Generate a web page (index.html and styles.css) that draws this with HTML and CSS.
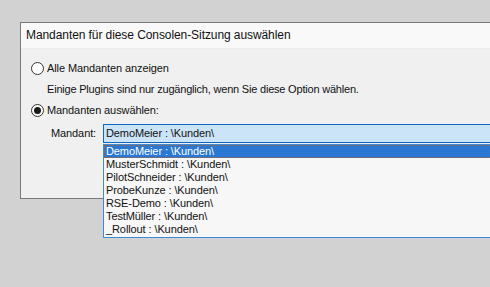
FILE: index.html
```html
<!DOCTYPE html>
<html>
<head>
<meta charset="utf-8">
<link rel="stylesheet" href="styles.css">
</head>
<body>
<div class="dialog">
  <div class="title">Mandanten für diese Consolen-Sitzung auswählen</div>
  <div class="content">
    <label class="radio-row"><span class="radio"></span><span>Alle Mandanten anzeigen</span></label>
    <div class="hint">Einige Plugins sind nur zugänglich, wenn Sie diese Option wählen.</div>
    <label class="radio-row second"><span class="radio checked"></span><span>Mandanten auswählen:</span></label>
    <div class="field-row">
      <span class="field-label">Mandant:</span>
      <div class="combo-wrap">
        <div class="combo">DemoMeier : \Kunden\</div>
        <ul class="list">
          <li class="selected">DemoMeier : \Kunden\</li>
          <li>MusterSchmidt : \Kunden\</li>
          <li>PilotSchneider : \Kunden\</li>
          <li>ProbeKunze : \Kunden\</li>
          <li>RSE-Demo : \Kunden\</li>
          <li>TestMüller : \Kunden\</li>
          <li>_Rollout : \Kunden\</li>
        </ul>
      </div>
    </div>
  </div>
</div>
</body>
</html>
```

FILE: styles.css
```css
html, body {
  margin: 0;
  padding: 0;
  background: #d2d2d2;
  overflow: hidden;
  width: 490px;
  height: 287px;
}
body {
  font-family: "Liberation Sans", Arial, sans-serif;
  font-size: 11px;
  letter-spacing: -0.1px;
  color: #111;
}
.dialog {
  margin: 22px 0 0 20px;
  width: 490px;
  height: 177px;
  border: 1px solid #7a7a7a;
  background: #f0f0f0;
  box-sizing: border-box;
}
.title {
  height: 25px;
  background: #f9f9f9;
  padding-left: 5px;
  line-height: 25px;
  font-size: 12px;
  letter-spacing: -0.08px;
  border-bottom: 1px solid #ececec;
}
.content {
  padding: 12px 0 0 10px;
}
.radio-row {
  display: flex;
  align-items: center;
  gap: 3px;
  height: 14px;
}
.radio {
  width: 11px;
  height: 11px;
  border: 1px solid #333;
  border-radius: 50%;
  background: #fff;
  position: relative;
}
.radio.checked::after {
  content: "";
  position: absolute;
  left: 2px;
  top: 2px;
  width: 7px;
  height: 7px;
  border-radius: 50%;
  background: #1a1a1a;
}
.hint {
  margin: 7px 0 0 16px;
  height: 14px;
  line-height: 14px;
  letter-spacing: -0.2px;
}
.second {
  margin-top: 7px;
}
.field-row {
  display: flex;
  margin-top: 7px;
}
.field-label {
  width: 52px;
  padding-left: 20px;
  line-height: 19px;
  box-sizing: content-box;
}
.combo-wrap {
  position: relative;
  flex: 1;
}
.combo {
  height: 19px;
  box-sizing: border-box;
  border: 1px solid #0f67c4;
  background: #cce4f7;
  padding-left: 2px;
  line-height: 17px;
}
.list {
  position: absolute;
  left: 0;
  top: 20px;
  width: 420px;
  margin: 0;
  padding: 0;
  list-style: none;
  background: #f7f7f7;
  border: 1px solid #3c8ad8;
  box-sizing: border-box;
  height: 94px;
}
.list li {
  height: 13px;
  line-height: 13px;
  padding-left: 2px;
}
.list li.selected {
  background: #2a78d4;
  color: #fff;
  outline: 1px dotted #b06020;
  outline-offset: -1px;
}
```
